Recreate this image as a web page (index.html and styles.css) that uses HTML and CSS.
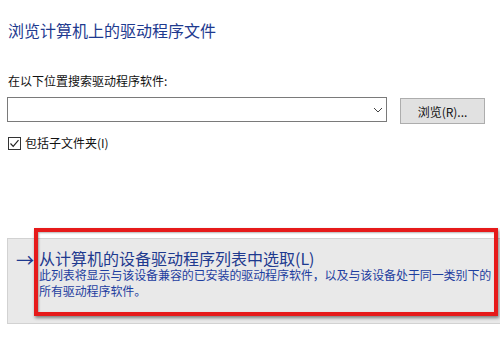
FILE: index.html
```html
<!DOCTYPE html>
<html lang="zh-CN">
<head>
<meta charset="utf-8">
<link rel="stylesheet" href="styles.css">
</head>
<body>
<div class="page">
  <div class="title">浏览计算机上的驱动程序文件</div>
  <div class="label">在以下位置搜索驱动程序软件:</div>
  <div class="row">
    <div class="combo">
      <svg class="chev" width="10" height="6" viewBox="0 0 10 6"><path d="M1 1 L5 5 L9 1" fill="none" stroke="#444" stroke-width="1"/></svg>
    </div>
    <button class="btn">浏览(R)...</button>
  </div>
  <label class="check">
    <span class="box"><svg width="11" height="11" viewBox="0 0 11 11"><path d="M1.5 5.5 L4.2 8.3 L9.5 2.2" fill="none" stroke="#222" stroke-width="1.2"/></svg></span>
    <span>包括子文件夹(I)</span>
  </label>
  <div class="panel">
    <div class="arrow">→</div>
    <div class="ptext">
      <div class="pmain">从计算机的设备驱动程序列表中选取(L)</div>
      <div class="pdesc">此列表将显示与该设备兼容的已安装的驱动程序软件，以及与该设备处于同一类别下的<br>所有驱动程序软件。</div>
    </div>
    <div class="highlight"></div>
  </div>
</div>
</body>
</html>
```
FILE: styles.css
```css
html, body {
  margin: 0;
  padding: 0;
  background: #ffffff;
}
body {
  width: 500px;
  height: 340px;
  overflow: hidden;
  font-family: "Noto Sans CJK SC", "Noto Sans", sans-serif;
  color: #1a1a1a;
}
.page {
  padding: 20px 0 0 7px;
}
.title {
  font-size: 16px;
  line-height: 20px;
  color: #1e3a8f;
  padding-left: 1px;
}
.label {
  margin-top: 33px;
  font-size: 12px;
  line-height: 16px;
  padding-left: 1px;
  color: #111;
}
.row {
  margin-top: 8px;
  display: flex;
  align-items: flex-start;
  gap: 13px;
}
.combo {
  width: 375px;
  height: 23px;
  border: 1px solid #7a7a7a;
  background: #fff;
  display: flex;
  align-items: center;
  justify-content: flex-end;
  padding-right: 3px;
  box-sizing: content-box;
}
.btn {
  margin-top: 1px;
  width: 85px;
  height: 26px;
  background: #e1e1e1;
  border: 1px solid #adadad;
  font-family: inherit;
  font-size: 12px;
  color: #111;
  padding: 0;
}
.check {
  margin-top: 11px;
  display: flex;
  align-items: center;
  gap: 4px;
  font-size: 12px;
  line-height: 16px;
  padding-left: 1px;
  color: #111;
}
.box {
  width: 11px;
  height: 11px;
  border: 1px solid #333;
  display: flex;
  background: #fff;
}
.panel {
  position: relative;
  margin-top: 87px;
  width: 500px;
  height: 86px;
  background: #e9e9e9;
  border: 1px solid #d2d2d2;
  border-right: none;
  display: flex;
  align-items: flex-start;
  padding-top: 10px;
  box-sizing: border-box;
}
.arrow {
  width: 31px;
  padding-left: 8px;
  box-sizing: border-box;
  font-size: 18px;
  line-height: 20px;
  color: #1e3a8f;
}
.ptext {
  color: #1e3ea0;
}
.pmain {
  font-size: 16px;
  line-height: 18px;
  color: #1e3a8f;
}
.pdesc {
  font-size: 12px;
  line-height: 16px;
  letter-spacing: -0.1px;
}
.highlight {
  position: absolute;
  left: 26px;
  top: -11px;
  width: 464px;
  height: 88px;
  border: 4px solid #e61a1a;
  box-sizing: border-box;
  box-shadow: 1px 2px 3px rgba(0,0,0,0.45), inset 1px 1px 2px rgba(0,0,0,0.3);
  pointer-events: none;
}
```
